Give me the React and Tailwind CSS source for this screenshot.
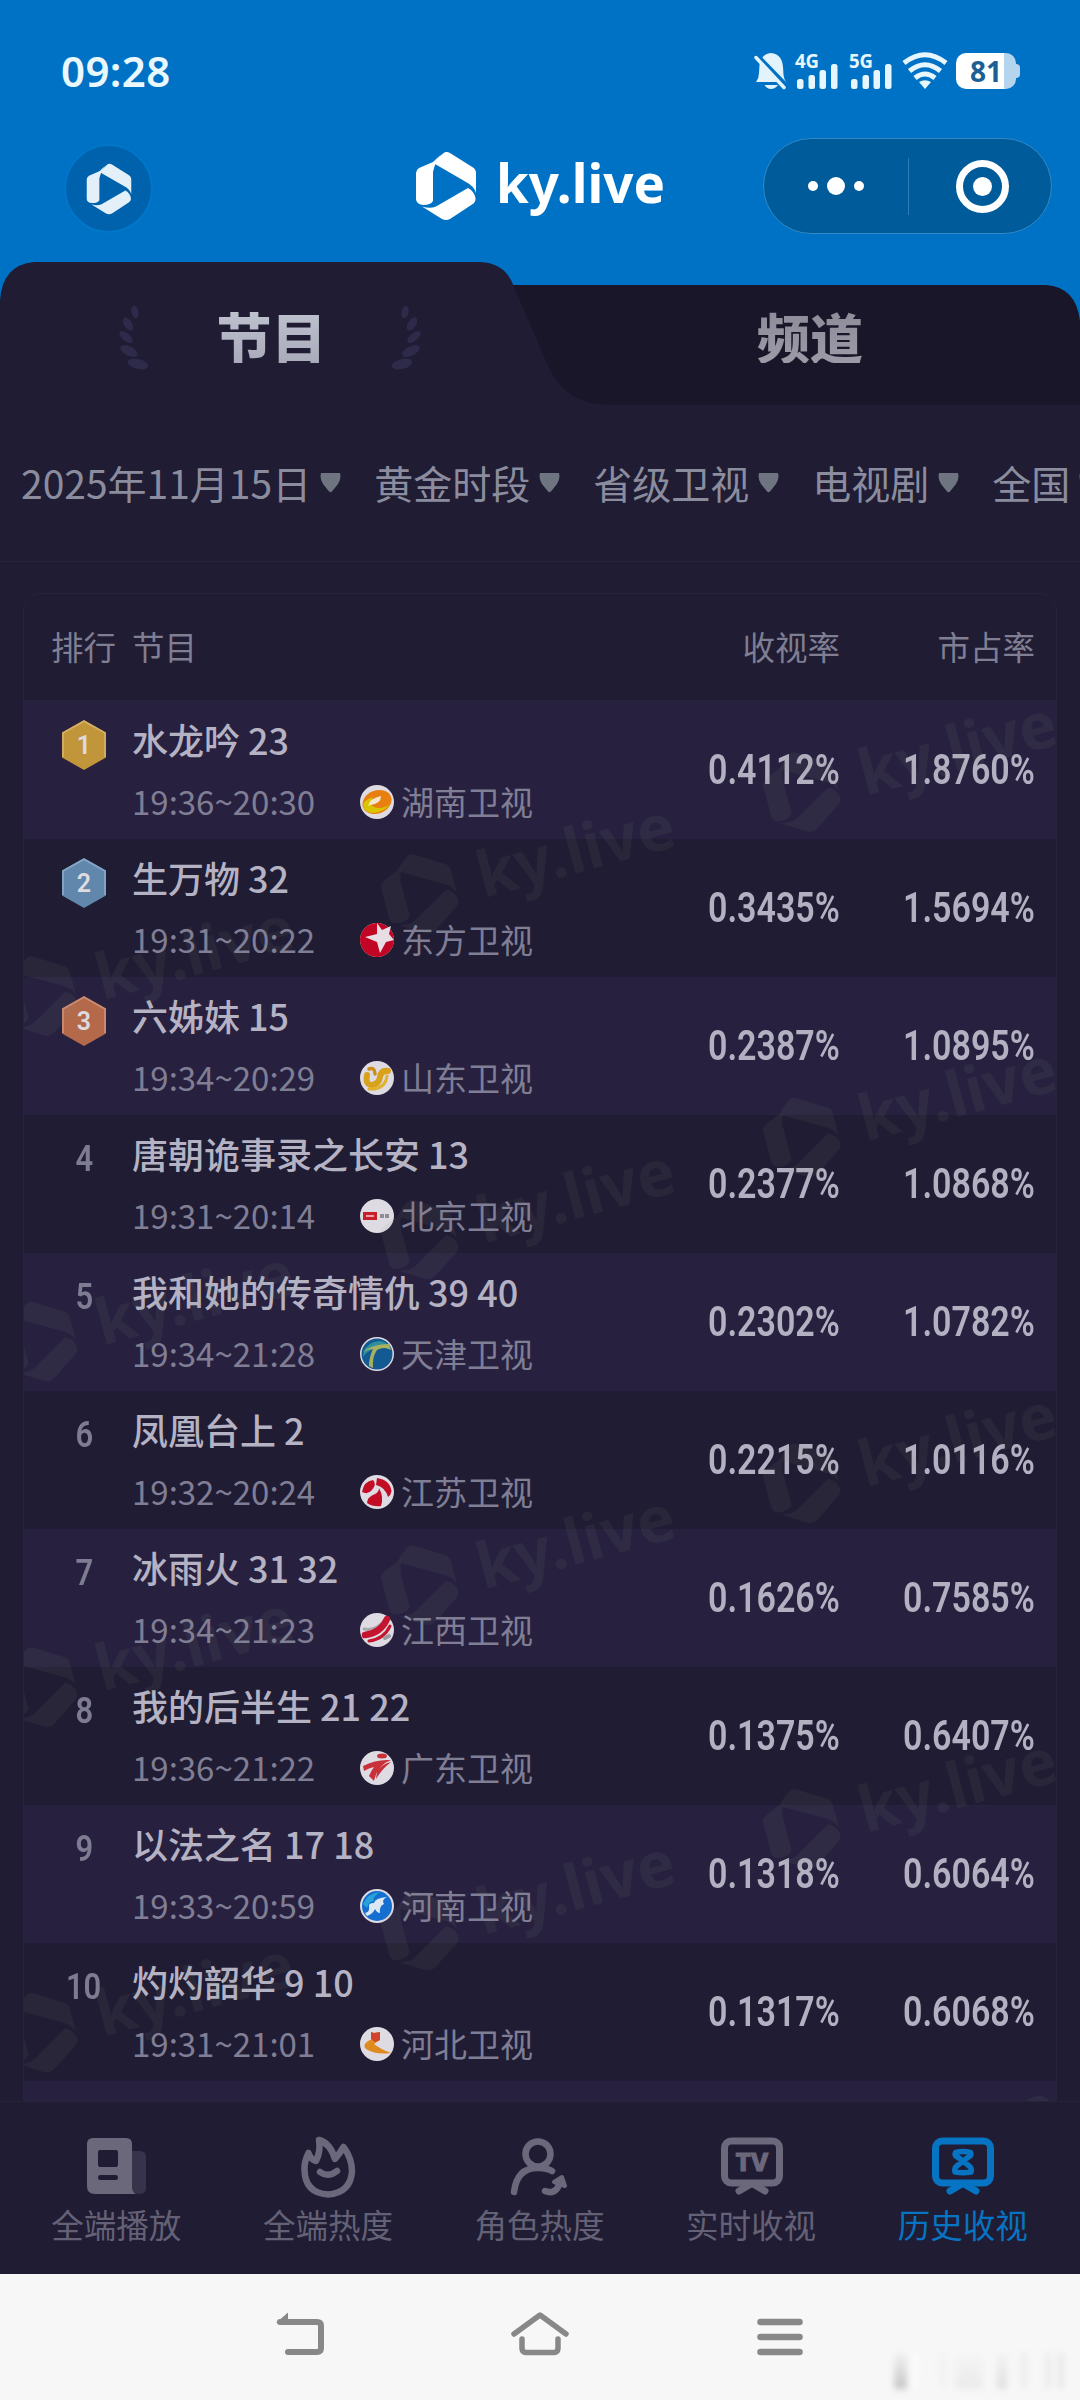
import React from 'react';
import clsx from 'clsx';

const FILTERS = ['2025年11月15日', '黄金时段', '省级卫视', '电视剧', '全国'];

const PROGRAMS = [
  { title: '水龙吟 23', time: '19:36~20:30', channel: '湖南卫视', rating: '0.4112%', share: '1.8760%' },
  { title: '生万物 32', time: '19:31~20:22', channel: '东方卫视', rating: '0.3435%', share: '1.5694%' },
  { title: '六姊妹 15', time: '19:34~20:29', channel: '山东卫视', rating: '0.2387%', share: '1.0895%' },
  { title: '唐朝诡事录之长安 13', time: '19:31~20:14', channel: '北京卫视', rating: '0.2377%', share: '1.0868%' },
  { title: '我和她的传奇情仇 39 40', time: '19:34~21:28', channel: '天津卫视', rating: '0.2302%', share: '1.0782%' },
  { title: '凤凰台上 2', time: '19:32~20:24', channel: '江苏卫视', rating: '0.2215%', share: '1.0116%' },
  { title: '冰雨火 31 32', time: '19:34~21:23', channel: '江西卫视', rating: '0.1626%', share: '0.7585%' },
  { title: '我的后半生 21 22', time: '19:36~21:22', channel: '广东卫视', rating: '0.1375%', share: '0.6407%' },
  { title: '以法之名 17 18', time: '19:33~20:59', channel: '河南卫视', rating: '0.1318%', share: '0.6064%' },
  { title: '灼灼韶华 9 10', time: '19:31~21:01', channel: '河北卫视', rating: '0.1317%', share: '0.6068%' },
];

const MEDALS = [
  { fill: '#c1953a', edge: '#d3ae64' },
  { fill: '#6187ad', edge: '#86a7c6' },
  { fill: '#b5694b', edge: '#cb8d72' },
];

// Folded hexagon mark, 60 x 68, centred on 0,0
const MarkShape = () => (
  <g>
    <path d="M-13 -24 L-5 -31.500 Q-11 -24 -13 -14 L-13 15 Q-15 19 -23 19 Q-30 18 -30 13 L-30 -13 Q-30 -16 -27 -18 Z" />
    <path d="M-11 -22 Q-9 -28 -3 -32.500 Q0 -35 4 -33 L27 -18.500 Q30 -16.500 30 -13 L30 7 Q28 0 20 -4 Z" />
    <path d="M22 2 Q28 5 29.500 12 Q30 16 26 18.500 L4 33 Q0 35 -4 33 L-24 20.500 Q-16 23 -10 20.500 Z" />
  </g>
);

const Brand = () => (
  <g>
    <MarkShape />
    <text x="50" y="17" fontFamily="'Noto Sans', sans-serif" fontWeight="700" fontSize="53" textLength="169" lengthAdjust="spacingAndGlyphs">
      ky.live
    </text>
  </g>
);

const SignalBars = ({ label }) => (
  <svg width="46" height="40" viewBox="0 0 46 40" fill="#e6f6fc" className="overflow-visible">
    <text x="0" y="16.500" fontFamily="'Noto Sans', sans-serif" fontWeight="700" fontSize="19" textLength="24" lengthAdjust="spacingAndGlyphs">
      {label}
    </text>
    <rect x="2" y="28" width="6.500" height="10" rx="2.500" />
    <rect x="13.500" y="24" width="6.500" height="14" rx="2.500" />
    <rect x="24.500" y="19" width="6.500" height="19" rx="2.500" />
    <rect x="36" y="13" width="6.500" height="25" rx="2.500" />
  </svg>
);

const StatusBar = () => (
  <div className="flex h-[142px] items-center justify-between pr-[60px] pl-[61px]">
    <span className="font-['Noto_Sans',sans-serif] text-[42px] leading-none font-semibold tracking-[0.4px] text-[#e9f8fd]">09:28</span>
    <div className="flex items-center">
      <svg width="34" height="40" viewBox="0 0 34 40" className="mr-[7px]">
        <path d="M17 2 Q28 3 29 16 L29.5 24 Q30 28 32 31 L2 31 Q5 27 5 22 L5.500 14 Q7 3 17 2 Z" fill="#e3f3fb" />
        <path d="M10.500 34 L24 34 Q21 38 17 38 Q13 38 10.500 34 Z" fill="#e3f3fb" />
        <path d="M4 5 L34 36" stroke="#0072c6" strokeWidth="4" />
        <path d="M2 6.500 L30 36.500" stroke="#e3f3fb" strokeWidth="3.500" strokeLinecap="round" />
      </svg>
      <SignalBars label="4G" />
      <span className="w-2" />
      <SignalBars label="5G" />
      <svg width="46" height="40" viewBox="0 0 46 40" className="ml-[7px]" fill="none" stroke="#e6f6fc" strokeWidth="5">
        <path d="M2 12 Q23 -4.500 44 12" />
        <path d="M7.500 20 Q23 7.500 38.500 20" />
        <path d="M13 27 Q23 19 33 27" />
        <path d="M17 31 Q23 27.500 29 31 L23 38 Z" fill="#e6f6fc" stroke="none" />
      </svg>
      <div className="ml-2 flex items-center">
        <div className="flex h-9 w-[60px] items-center justify-center rounded-[10px] bg-linear-to-r from-white from-80% to-[#b5d5ee] to-80% font-['Noto_Sans',sans-serif] text-[28px] leading-none font-bold text-[#1c5f94]">
          <span>81</span>
        </div>
        <div className="h-[14px] w-[4px] rounded-r-[4px] bg-[#b5d5ee]" />
      </div>
    </div>
  </div>
);

const TitleBar = () => (
  <div className="flex h-[119px] items-start justify-between pr-[28px] pl-[64px]">
    <div className="mt-[2px] flex size-[89px] items-center justify-center rounded-full border-2 border-[#0077c9] bg-[#0062ac]">
      <svg width="46" height="54" viewBox="-31 -36 62 72" fill="#e4f0f9">
        <MarkShape />
      </svg>
    </div>
    <svg width="254" height="90" viewBox="-32 -45 254 90" className="-mt-[1px] ml-[166px]" fill="#fff">
      <Brand />
    </svg>
    <div className="-mt-[4px] flex h-[96px] w-[289px] items-center rounded-full border border-[#3389c6] bg-[#005b9b]">
      <div className="flex w-[144px] items-center justify-center gap-[9px]">
        <span className="size-[10px] rounded-full bg-white" />
        <span className="size-[18px] rounded-full bg-white" />
        <span className="size-[10px] rounded-full bg-white" />
      </div>
      <span className="h-[57px] w-px bg-[#2b7eb8]" />
      <div className="flex flex-1 items-center justify-center pl-[5px]">
        <span className="flex size-[53px] items-center justify-center rounded-full border-[7px] border-white">
          <span className="size-[19px] rounded-full bg-white" />
        </span>
      </div>
    </div>
  </div>
);

const Laurel = ({ className }) => (
  <svg width="32" height="68" viewBox="0 0 32 68" fill="#2d2a4a" className={className}>
    <ellipse cx="17" cy="7" rx="3.500" ry="6.500" transform="rotate(-12 17 7)" />
    <ellipse cx="10" cy="19" rx="4" ry="7.500" transform="rotate(-32 10 19)" />
    <ellipse cx="8" cy="32" rx="4" ry="8" transform="rotate(-50 8 32)" />
    <ellipse cx="11" cy="46" rx="4.800" ry="9.500" transform="rotate(-64 11 46)" />
    <ellipse cx="20" cy="59" rx="5" ry="10.500" transform="rotate(-76 20 59)" />
  </svg>
);

const Tabs = () => (
  <div className="relative h-[144px]">
    <svg className="absolute inset-0" width="1080" height="144" viewBox="0 0 1080 144">
      <path d="M490 24 H1046 Q1076 26 1080 60 V144 H490 Z" fill="#19162a" />
      <path d="M0 144 V40 Q2 4 34 1 H480 Q506 2 514 26 L549 107 Q566 143 606 143.500 V144 Z" fill="#1f1c33" />
    </svg>
    <div className="relative flex h-full leading-none font-black">
      <div className="flex w-1/2 items-start justify-center gap-[63px] pt-[44px]">
        <Laurel />
        <span className="mt-[3px] ml-[3px] bg-linear-to-b from-[#bfc2cf] to-[#a9abba] bg-clip-text text-[55px] text-transparent">节目</span>
        <Laurel className="-scale-x-100" />
      </div>
      <div className="flex w-1/2 items-start justify-center pt-[49px]">
        <span className="bg-linear-to-b from-[#8d8c98] to-[#9c9aa6] bg-clip-text text-[53px] text-transparent">频道</span>
      </div>
    </div>
  </div>
);

const FilterBar = () => (
  <div className="flex h-[157px] items-start gap-[33px] overflow-hidden border-b border-[#26233a] bg-[#1f1c33] pt-[59px] pl-[21px]">
    {FILTERS.map((label) => (
      <div key={label} className="flex shrink-0 items-center gap-[9px] whitespace-nowrap text-[#8b8c9e]">
        <span className="-mt-px text-[39px] leading-[39px]">{label}</span>
        <svg width="21" height="20" viewBox="0 0 21 20" fill="#6e7480">
          <path d="M1 0 H20 Q21.500 6 18 11 L12 18.500 Q10.500 20 9 18.500 L3 11 Q-0.500 6 1 0 Z" />
        </svg>
      </div>
    ))}
  </div>
);

const ChannelLogo = ({ name }) => {
  switch (name) {
    case '湖南卫视':
      return (
        <g>
          <ellipse cx="17" cy="17" rx="15" ry="11.500" fill="#e87f10" transform="rotate(-22 17 17)" />
          <path d="M3 20 Q4 28 14 28 Q24 27 30 19 Q22 25 14 22 Q8 19 13 12 Q4 15 3 20 Z" fill="#d8c500" />
          <path d="M8 21 Q10 13 21 11 Q21 19 10 20 Z" fill="#f3e6cf" />
        </g>
      );
    case '东方卫视':
      return (
        <g>
          <circle cx="17" cy="17" r="17" fill="#c20524" />
          <path d="M17 0 L22 7 L31 3 L29 11 L34 17 L26 19 L20 30 L17 19 L5 14 L17 11 Z" fill="#e7dde4" />
        </g>
      );
    case '山东卫视':
      return (
        <g fill="none" strokeLinecap="round">
          <path d="M7 14 Q5 24 12 24 Q19 23 20 16 Q21 9 28 10" stroke="#d8a21c" strokeWidth="6" />
          <path d="M9 28 Q25 29 27 15" stroke="#e0b12f" strokeWidth="3" />
          <path d="M9 8 Q15 6 15 13" stroke="#c98d1a" strokeWidth="3.500" />
        </g>
      );
    case '北京卫视':
      return (
        <g>
          <rect x="3" y="13" width="14" height="8" fill="#c8202b" />
          <path d="M6 17 H14" stroke="#e6a3a6" strokeWidth="2" />
          <path d="M20 17 H30" stroke="#8f8c96" strokeWidth="4" strokeDasharray="4 1" />
        </g>
      );
    case '天津卫视':
      return (
        <g>
          <circle cx="17" cy="17" r="15.500" fill="#145a92" />
          <path d="M3 20 Q3 9 14 5 Q24 2 30 10 Q18 7 14 12 Q7 14 3 20 Z" fill="#2f8f9c" />
          <path d="M3 15 Q12 7 29 7 Q30 10 31 13 Q24 9 17 13 Q12 20 13 31 L9 29 Q9 20 13 12 Q8 12 3 15 Z" fill="#a9b060" />
        </g>
      );
    case '江苏卫视':
      return (
        <g fill="#c30d25">
          <path d="M17 3 Q30 5 31.500 16 Q31 20 28 22 Q25 12 16 10 Z" />
          <path d="M2 17 Q4 6 13 5 Q17 9 12 15 Q8 20 2 17 Z" />
          <path d="M7 28 Q7 22 15 19 Q19 17 19 13 Q24 22 21 31 Q13 32 7 28 Z" />
        </g>
      );
    case '江西卫视':
      return (
        <g fill="none" strokeLinecap="round">
          <path d="M4 16 Q14 18 22 10" stroke="#aaa9b0" strokeWidth="3" />
          <path d="M5 22 Q21 20 27 6" stroke="#c5142d" strokeWidth="6.500" />
          <path d="M9 28 Q24 26 30 13" stroke="#c5142d" strokeWidth="3" />
          <path d="M25 25 L29 23" stroke="#9a9aa2" strokeWidth="4" />
        </g>
      );
    case '广东卫视':
      return (
        <g fill="#c8303a">
          <path d="M3 15 Q16 8 31 9 Q17 14 14 30 L9 25 Q11 20 14 16 Q9 17 4 20 Z" />
          <path d="M17 20 Q22 13 31 11 Q22 18 16 28 Z" />
          <ellipse cx="22" cy="5" rx="5" ry="2.500" />
        </g>
      );
    case '河南卫视':
      return (
        <g>
          <circle cx="17" cy="17" r="15" fill="#146fd0" />
          <path d="M3 15 Q8 4 20 3 Q12 8 14 12 Q9 12 7 19 Z" fill="#27a3d8" />
          <path d="M5 24 Q10 23 9 18 Q8 14 14 14 Q15 9 27 8 Q21 11 24 15 Q19 17 20 24 Q17 24 15 20 Q13 25 7 27 Z" fill="#dbe8f4" />
        </g>
      );
    case '河北卫视':
      return (
        <g>
          <path d="M11 5 L14 6 L20 5 L20 13 L14 17 Q20 22 31 26 Q16 28 6 22 Q1 17 12 12 Z" fill="#df8b1f" />
          <path d="M11 5 L14 6 L20 5 L20 13 L15 15 L11 12 Z" fill="#d1432c" />
        </g>
      );
    default:
      return null;
  }
};

const Rank = ({ rank }) => {
  const medal = MEDALS[rank - 1];
  if (!medal) {
    return (
      <span className="mt-[26px] inline-block scale-x-[0.86] font-['Roboto',sans-serif] text-[36px] leading-[36px] font-semibold text-[#7e7c92]">
        {rank}
      </span>
    );
  }
  return (
    <svg width="44" height="50" viewBox="0 0 44 50" className="mt-[19px]">
      <path d="M22 0 L44 12.500 V37.500 L22 50 L0 37.500 V12.500 Z" fill={medal.fill} />
      <path d="M1 37 V13 L22 1.200 L43 13 V37" fill="none" stroke={medal.edge} strokeWidth="1.800" />
      <text x="22" y="34" textAnchor="middle" fontFamily="Roboto, sans-serif" fontWeight="600" fontSize="25" fill="#dedbe0">
        {rank}
      </text>
    </svg>
  );
};

const Percent = ({ value, className }) => (
  <div className={clsx('flex justify-end', className)}>
    <span className="origin-right scale-x-[0.81] font-['Roboto',sans-serif] text-[42px] leading-none font-semibold text-[#b2b0c1]">{value}</span>
  </div>
);

const ProgramRow = ({ program, rank }) => (
  <div className={clsx('flex h-[138px]', rank % 2 === 1 ? 'bg-[#27213f]' : 'bg-[#1f1c33]')}>
    <div className="flex w-[108px] items-start justify-center pl-[12px]">
      <Rank rank={rank} />
    </div>
    <div className="flex-1 pt-[19px] whitespace-nowrap">
      <div className="text-[36px] leading-[38px] font-medium text-[#b4b2c3]">{program.title}</div>
      <div className="mt-[25px] flex items-center text-[33px] leading-[36px] text-[#807e95]">
        <span className="w-[228px]">{program.time}</span>
        <svg width="34" height="34" viewBox="0 0 34 34" className="mt-[2px] mr-[7px]">
          <circle cx="17" cy="17" r="17" fill="#dedbe3" />
          <ChannelLogo name={program.channel} />
        </svg>
        <span>{program.channel}</span>
      </div>
    </div>
    <div className="flex items-center pr-[21px]">
      <Percent value={program.rating} className="w-[190px]" />
      <Percent value={program.share} className="w-[195px]" />
    </div>
  </div>
);

// Tilted brand marks repeated over the table
const Watermark = () => (
  <svg className="pointer-events-none absolute inset-0" width="1034" height="1509" viewBox="23 593 1034 1509" fill="#8f8f80" fillOpacity="0.09">
    {[0, 1, 2, 3, 4].map((i) =>
      [
        [38, 995],
        [419, 893],
        [801, 791],
      ].map(([x, y]) => (
        <g key={`${x}-${i}`} transform={`translate(${x} ${y + i * 345.6}) rotate(-15) scale(1.2)`}>
          <Brand />
        </g>
      ))
    )}
  </svg>
);

const RatingTable = () => (
  <div className="relative mx-[23px] mt-[31px] h-[1520px] overflow-hidden rounded-t-[18px] border border-[#26233a]">
    <div className="flex h-[107px] items-center border-b border-[#26233a] pr-[21px] pb-[1px] pl-[27px] text-[32.5px] text-[#7f7e92]">
      <span className="w-[81px]">排行</span>
      <span className="flex-1">节目</span>
      <span>收视率</span>
      <span className="w-[195px] text-right">市占率</span>
    </div>
    {PROGRAMS.map((program, index) => (
      <ProgramRow key={program.title} program={program} rank={index + 1} />
    ))}
    <div className="h-[138px] bg-[#27213f]" />
    <Watermark />
  </div>
);

const NewsIcon = () => (
  <>
    <path d="M49 15 H55 Q61 15 61 21 V52 Q61 58 54 58 Q47 58 47 50 V15 Z" fill="#37334b" />
    <path fillRule="evenodd" d="M8 2 H41 Q47 2 47 8 V50 Q47 56 51 58 H10 Q2 58 2 50 V8 Q2 2 8 2 Z M15 14 Q13 14 13 16 V29 Q13 31 15 31 H31 Q33 31 33 29 V16 Q33 14 31 14 Z M15 39 Q13 39 13 41.500 Q13 44 15 44 H31 Q33 44 33 41.500 Q33 39 31 39 Z" fill="currentColor" />
  </>
);

const FlameIcon = () => (
  <g fill="none" stroke="currentColor" strokeWidth="6.500" strokeLinecap="round" strokeLinejoin="round">
    <path d="M23 4 Q34 7 39 23 Q44 17 47.500 11 Q56 22 56 36 Q54 57 32 58.500 Q9 57 8.500 34 Q8 26 12.500 17 Q15 24 20 25 Q25 15 23 4 Z" />
    <path d="M24 36 Q32 42 41 35" />
  </g>
);

const RoleIcon = () => (
  <g fill="none" stroke="currentColor" strokeWidth="6.500" strokeLinecap="round" strokeLinejoin="round">
    <circle cx="30" cy="18" r="12.500" />
    <path d="M6 56 Q9 31 31 32 Q39 32 44 35" />
    <path d="M37 55 Q47 59 51 49" />
    <path d="M46 46 L54 41 L57 50 Z" fill="currentColor" strokeWidth="4" />
  </g>
);

const TvFrame = () => (
  <g fill="none" stroke="currentColor" strokeWidth="7" strokeLinecap="round" strokeLinejoin="round">
    <rect x="4.500" y="5" width="55" height="42" rx="7" />
    <path d="M19 55 L31 48 H33 L45 55" />
  </g>
);

const LiveTvIcon = () => (
  <>
    <TvFrame />
    <text x="32" y="35" textAnchor="middle" fontFamily="'Noto Sans', sans-serif" fontWeight="800" fontSize="24" fill="currentColor" stroke="currentColor" strokeWidth="0.800" textLength="33" lengthAdjust="spacingAndGlyphs">
      TV
    </text>
  </>
);

const HistoryTvIcon = () => (
  <>
    <TvFrame />
    <path d="M24.500 16.500 Q32 14.500 39.500 16.500 Q41 19.500 37.500 21 L27 29 Q22.500 32 24 36 Q32 37.500 40 36 Q41.500 32 37 29 L26.500 21 Q23 19.500 24.500 16.500 Z" fill="none" stroke="currentColor" strokeWidth="5.500" strokeLinejoin="round" />
  </>
);

const NAV_ITEMS = [
  { label: '全端播放', Icon: NewsIcon },
  { label: '全端热度', Icon: FlameIcon },
  { label: '角色热度', Icon: RoleIcon },
  { label: '实时收视', Icon: LiveTvIcon },
  { label: '历史收视', Icon: HistoryTvIcon, active: true },
];

const BottomNav = () => (
  <nav className="grid h-[173px] grid-cols-5 border-t border-[#26233a] bg-[#1f1c33] px-[11px]">
    {NAV_ITEMS.map(({ label, Icon, active }) => (
      <div key={label} className={clsx('flex flex-col items-center pt-[34px]', active ? 'text-[#0773c3]' : 'text-[#6b687c]')}>
        <svg width="64" height="64" viewBox="0 0 64 64">
          <Icon />
        </svg>
        <span className={clsx('mt-[6px] mr-px text-[32.5px] leading-[36px]', !active && 'text-[#646176]')}>{label}</span>
      </div>
    ))}
  </nav>
);

const SystemBar = () => (
  <div className="relative h-[126px] bg-[#f7f7f7]">
    <div className="flex h-full items-center justify-center gap-[176px] pb-[6px] text-[#888]">
      <svg width="64" height="50" viewBox="0 0 64 50" fill="none" stroke="currentColor" strokeWidth="6" strokeLinecap="round" strokeLinejoin="round">
        <path d="M12 13 H49 Q53 13 53 17 V39 Q53 43 49 43 H20" />
        <path d="M8 14 L20 3.500 V14 Z" fill="currentColor" stroke="none" />
      </svg>
      <svg width="64" height="50" viewBox="0 0 64 50" fill="none" stroke="currentColor" strokeWidth="5.500" strokeLinecap="round" strokeLinejoin="round">
        <path d="M6 25 L32 6 L58 25" />
        <path d="M14 30 V39 Q14 43.500 18 43.500 H46 Q50 43.500 50 39 V30" />
      </svg>
      <svg width="64" height="50" viewBox="0 0 64 50" stroke="currentColor" strokeWidth="6.500" strokeLinecap="round">
        <path d="M12.500 13 H51.500 M12.500 28 H51.500 M12.500 43 H51.500" />
      </svg>
    </div>
    {/* faint streaks in the corner */}
    <div className="absolute right-0 bottom-[11px] flex h-[36px] w-[190px] items-stretch opacity-70 blur-[3px]">
      <span className="ml-[4px] w-[13px] bg-linear-to-b from-[#f0f0f0] to-[#b0b0b0]" />
      <span className="ml-[6px] w-[5px] bg-white" />
      <span className="ml-[22px] w-[6px] bg-[#efefef]" />
      <span className="ml-[9px] w-[28px] bg-linear-to-b from-[#f5f5f5] to-[#e6e6e6]" />
      <span className="ml-[14px] w-[10px] bg-linear-to-b from-[#f2f2f2] to-[#d4d4d4]" />
      <span className="ml-[14px] w-[6px] bg-[#e8e8e8]" />
      <span className="ml-[18px] w-[6px] bg-[#e6e6e6]" />
      <span className="ml-[7px] w-[6px] bg-[#e2e2e2]" />
    </div>
  </div>
);

const App = () => {
  return (
    <div className="flex h-[2400px] w-[1080px] flex-col overflow-hidden bg-[#0072c6] font-['Noto_Sans_CJK_SC',sans-serif]">
      <StatusBar />
      <TitleBar />
      <Tabs />
      <FilterBar />
      <main className="min-h-0 flex-1 overflow-hidden bg-[#1f1c33]">
        <RatingTable />
      </main>
      <BottomNav />
      <SystemBar />
    </div>
  );
};

export default App;
